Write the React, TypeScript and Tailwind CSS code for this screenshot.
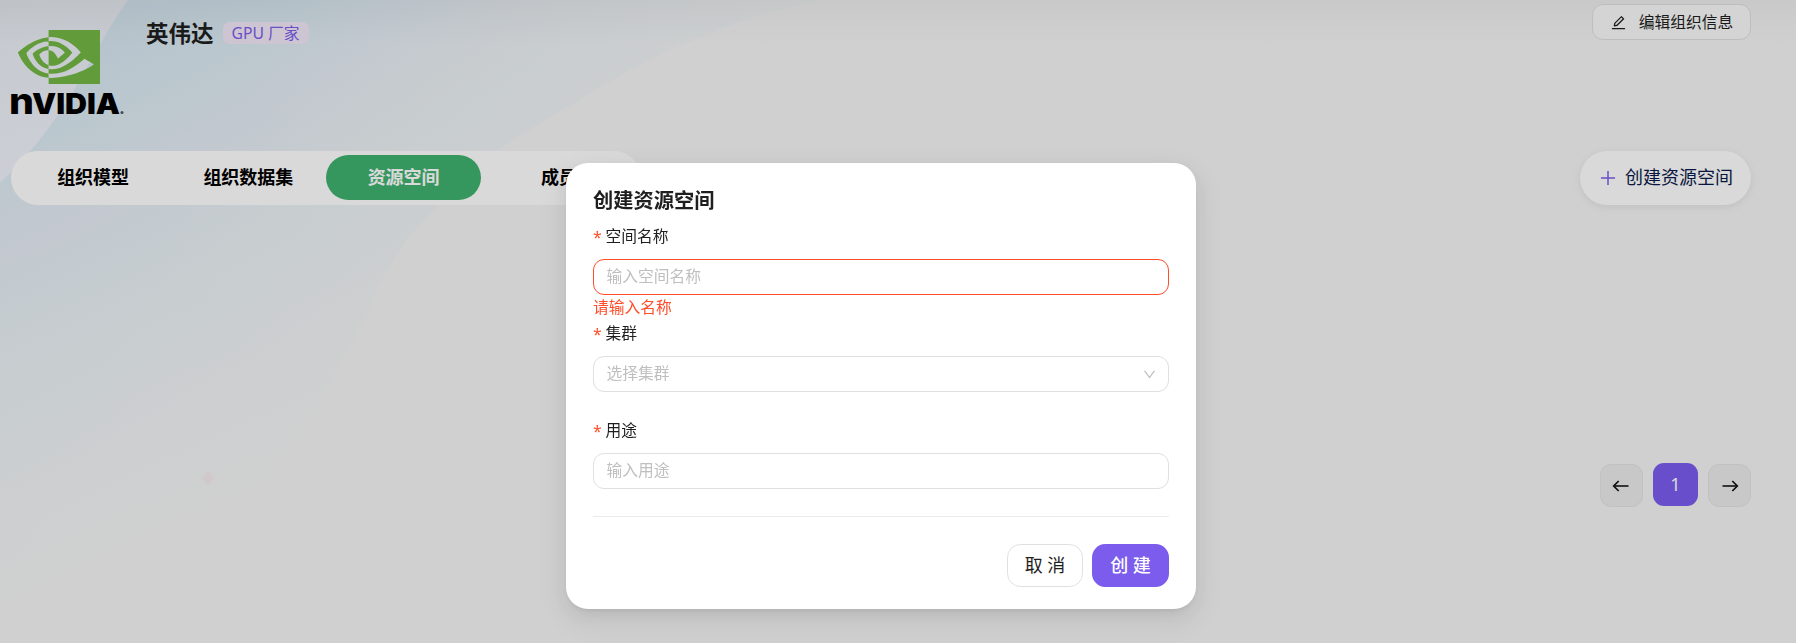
import type { ReactNode } from 'react';
import { AiOutlineDown, AiOutlineEdit, AiOutlinePlus } from 'react-icons/ai';
import { SiNvidia } from 'react-icons/si';

const tabs = [
  { key: 'models', label: '组织模型' },
  { key: 'datasets', label: '组织数据集' },
  { key: 'spaces', label: '资源空间' },
  { key: 'members', label: '成员' },
];

function Backdrop() {
  const sweep =
    'M0 0H820C760 12 725 27 700 37C650 58 610 80 576 102C545 120 520 135 498 150C475 168 455 187 440 205C425 220 412 232 402 246C388 268 378 287 370 307C350 350 320 400 290 450L120 643H0Z';

  return (
    <svg className="absolute inset-0 h-full w-full" viewBox="0 0 1796 643" preserveAspectRatio="none">
      <defs>
        <linearGradient id="sweep" gradientUnits="userSpaceOnUse" x1="0" y1="0" x2="235" y2="508">
          <stop offset="0.12" stopColor="#d6e6f0" />
          <stop offset="0.24" stopColor="#dbeaf3" />
          <stop offset="0.38" stopColor="#e4ecf4" />
          <stop offset="0.64" stopColor="#ebf2f5" />
          <stop offset="0.82" stopColor="#f1f4f5" />
          <stop offset="1" stopColor="#f5f5f5" />
        </linearGradient>
        {/* fades the sweep out towards its right edge */}
        <linearGradient id="fade" gradientUnits="userSpaceOnUse" x1="220" y1="140" x2="540" y2="320">
          <stop offset="0" stopColor="#f5f5f5" stopOpacity="0" />
          <stop offset="1" stopColor="#f5f5f5" stopOpacity="0.6" />
        </linearGradient>
        <linearGradient id="corner" gradientUnits="userSpaceOnUse" x1="0" y1="0" x2="20" y2="160">
          <stop offset="0" stopColor="#e8edf3" />
          <stop offset="1" stopColor="#f0f3fb" />
        </linearGradient>
        <linearGradient id="header" x1="0" y1="0" x2="0" y2="1">
          <stop offset="0" stopColor="#000" stopOpacity="0.035" />
          <stop offset="1" stopColor="#000" stopOpacity="0" />
        </linearGradient>
      </defs>
      <path d={sweep} fill="url(#sweep)" />
      <path d={sweep} fill="url(#fade)" />
      <path d="M0 0H128C110 24 92 60 74 90C55 122 32 152 0 183Z" fill="url(#corner)" />
      <path d="M208 471L214 478L208 485L202 478Z" fill="#f5ecee" />
      <rect width="1796" height="45" fill="url(#header)" />
    </svg>
  );
}

function Logo() {
  return (
    <div className="flex w-[113px] flex-col pt-[16px]">
      <SiNvidia className="ml-[7px] h-[82px] w-[82px] text-[#74b743]" />
      <svg className="-mt-[14px] h-[32px] w-[114px] overflow-visible" viewBox="0 0 114 32">
        <text x="-2" y="30" fontFamily="Inter, sans-serif" fontWeight="800" fontSize="36" textLength="25" lengthAdjust="spacingAndGlyphs">n</text>
        <text x="21" y="30" fontFamily="Inter, sans-serif" fontWeight="900" fontSize="28" textLength="88" lengthAdjust="spacingAndGlyphs">VIDIA</text>
        <circle cx="111" cy="28.5" r="1.5" fill="#555" />
      </svg>
    </div>
  );
}

function Arrow({ flip = false }: { flip?: boolean }) {
  return (
    <svg width="18" height="18" viewBox="0 0 18 18" fill="none" className={flip ? 'rotate-180' : '-ml-px'}>
      <path d="M2 9H16.5" stroke="#222" strokeWidth="1.7" />
      <path d="M6.7 4L1.7 9L6.7 14" stroke="#111" strokeWidth="1.7" />
    </svg>
  );
}

interface FieldProps {
  label: string;
  error?: string;
  children: ReactNode;
}

function Field({ label, error, children }: FieldProps) {
  return (
    <div className="h-[97px]">
      <label className="flex h-[36px] items-start pt-px text-[15.75px] leading-[25px] text-[#1f1f1f]">
        <span className="mr-[5px] w-[7.5px] pt-px text-[15.75px] text-[#ff4d29]">*</span>
        {label}
      </label>
      {children}
      {error && <p className="text-[15.75px] leading-[24px] text-[#ff4d29]">{error}</p>}
    </div>
  );
}

function CreateSpaceModal() {
  const input =
    'block h-[36px] w-full rounded-[11px] border bg-white px-[12.5px] pb-[2px] text-[15.75px] outline-none placeholder:text-[#bfbfbf]';

  return (
    <div className="fixed inset-0 flex items-start justify-center bg-black/15 pt-[163px]">
      <div className="mr-[34px] flex h-[446px] w-[630px] flex-col rounded-[22px] bg-white px-[27px] pt-[22px] shadow-[0_7px_18px_0_rgba(0,0,0,0.08),0_3px_7px_-4px_rgba(0,0,0,0.12),0_10px_32px_9px_rgba(0,0,0,0.05)]">
        <h2 className="h-[38px] text-[20.25px] font-semibold leading-[30px] text-[#1f1f1f]">创建资源空间</h2>
        <Field label="空间名称" error="请输入名称">
          <input className={`${input} border-[#ff4d29]`} placeholder="输入空间名称" />
        </Field>
        <Field label="集群">
          <button className="flex h-[36px] w-full items-center justify-between rounded-[11px] border border-[#e0e0e0] pl-[12.5px] pr-[11px] text-[15.75px] text-[#bfbfbf]">
            选择集群
            <AiOutlineDown size={15} />
          </button>
        </Field>
        <Field label="用途">
          <input className={`${input} border-[#e0e0e0]`} placeholder="输入用途" />
        </Field>
        <div className="mt-[2px] flex justify-end gap-[9px] border-t border-[#ebebeb] pt-[27px]">
          <button className="h-[43px] w-[76px] rounded-[13.5px] border border-[#e0e0e0] bg-white text-[18px] text-[#1f1f1f]">
            取 消
          </button>
          <button className="h-[43px] w-[77px] rounded-[13.5px] bg-[#7c5cec] text-[18px] font-medium text-white">
            创 建
          </button>
        </div>
      </div>
    </div>
  );
}

export default function App() {
  const pager = 'mt-px flex h-[43px] w-[43px] items-center justify-center rounded-[11px] border border-[#e3e3e3] bg-[#ebebeb]';

  return (
    <div className="relative h-[643px] overflow-hidden bg-[#f5f5f5] font-['Noto_Sans','Noto_Sans_CJK_SC',sans-serif]">
      <Backdrop />
      <main className="relative pl-[11px] pr-[45px]">
        <header className="flex h-[151px] items-start">
          <Logo />
          <h1 className="ml-[22px] mt-[17px] text-[22.5px] font-semibold leading-[34px] text-[#1f1f1f]">英伟达</h1>
          <span className="ml-[9px] mt-[22px] h-[22px] rounded-[7px] bg-[#f1e8f7] px-[9px] text-[15.75px] leading-[22px] text-[#7c5cec]">
            GPU 厂家
          </span>
          <button className="ml-auto mt-[4px] flex h-[36px] w-[159px] items-center justify-center gap-[12px] rounded-[11px] border border-[#e0e0e0] bg-[#fafafa] pt-px text-[15.75px] text-[#1f1f1f]">
            <AiOutlineEdit size={17} />
            编辑组织信息
          </button>
        </header>

        <div className="flex items-center justify-between">
          <nav className="flex h-[54px] items-start rounded-full bg-white px-[4.5px] pt-[4px]">
            {tabs.map((tab) => (
              <button
                key={tab.key}
                className={`h-[45px] w-[155.25px] rounded-full text-[18px] font-bold ${
                  tab.key === 'spaces' ? 'bg-[#40b26f] text-white' : 'text-black'
                }`}
              >
                {tab.label}
              </button>
            ))}
          </nav>
          <button className="flex h-[54px] w-[171px] items-center justify-center gap-[7px] rounded-full bg-white pb-px text-[18px] text-[#0b1a4a] shadow-[0_2px_9px_rgba(0,0,0,0.08)]">
            <AiOutlinePlus size={20} className="text-[#7c5cec]" />
            创建资源空间
          </button>
        </div>

        <div className="mt-[258px] flex items-start justify-end gap-[10px]">
          <button className={pager}>
            <Arrow />
          </button>
          <button className="flex h-[43px] w-[45px] items-center justify-center rounded-[11px] bg-[#7c5cef] text-[18px] text-white">
            1
          </button>
          <button className={pager}>
            <Arrow flip />
          </button>
        </div>
      </main>
      <CreateSpaceModal />
    </div>
  );
}
